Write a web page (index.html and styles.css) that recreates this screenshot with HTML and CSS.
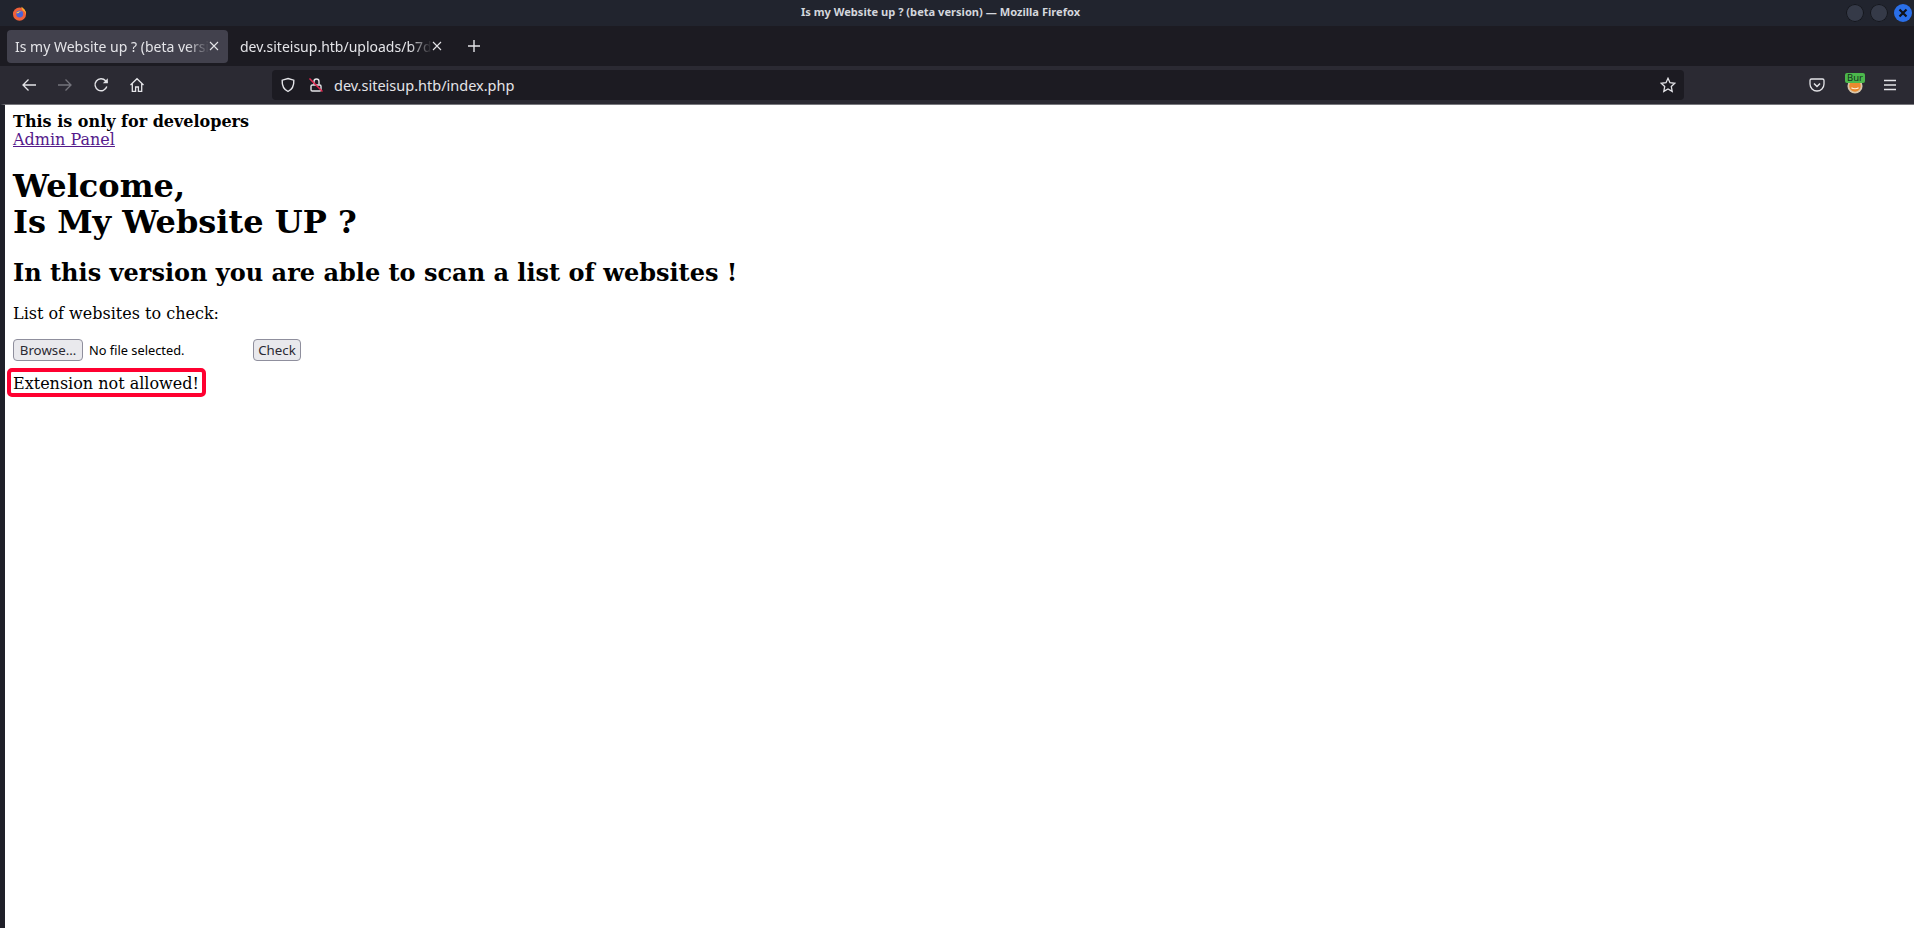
FILE: index.html
```html
<!DOCTYPE html>
<html lang="en">
<head>
    <meta charset="UTF-8">
    <title>Is my Website up ? (beta version) — Mozilla Firefox</title>
    <link rel="stylesheet" href="styles.css">
</head>
<body>

<div class="window">
    <div class="titlebar">
        <svg class="ff-logo" viewBox="0 0 16 16" width="15" height="15">
            <circle cx="8" cy="8.600" r="7" fill="#f0603a"/>
            <path d="M9.500 .8c3.400 1.500 5.800 4.400 5.400 8.500-.6-2.600-2-4-3.600-4.800-.2-1.500-.9-2.800-1.800-3.700z" fill="#ffb02e"/>
            <circle cx="8.200" cy="8.600" r="3.700" fill="#4a62d8"/>
            <path d="M4.500 7.600c1.400-1.900 4-2.600 6.200-1.600-1.700-.2-2.900.5-3.400 1.400-.9.200-1.800.1-2.800.2z" fill="#ffc24a"/>
        </svg>
        <div class="window-title">Is my Website up ? (beta version) — Mozilla Firefox</div>
        <div class="window-buttons">
            <span class="win-btn"></span>
            <span class="win-btn"></span>
            <span class="win-btn win-close">
                <svg viewBox="0 0 18 18" width="18" height="18"><path d="M5.500 5.500l7 7M12.500 5.500l-7 7" stroke="#10131a" stroke-width="2.200" fill="none"/></svg>
            </span>
        </div>
    </div>

    <div class="tabbar">
        <div class="tab tab-active">
            <span class="tab-label">Is my Website up ? (beta versi</span>
            <svg class="tab-close" viewBox="0 0 10 10" width="10" height="10"><path d="M1 1l8 8M9 1l-8 8" stroke="#e4e4e8" stroke-width="1.100" fill="none"/></svg>
        </div>
        <div class="tab tab-other">
            <span class="tab-label">dev.siteisup.htb/uploads/b7d</span>
            <svg class="tab-close" viewBox="0 0 10 10" width="10" height="10"><path d="M1 1l8 8M9 1l-8 8" stroke="#e4e4e8" stroke-width="1.100" fill="none"/></svg>
        </div>
        <svg class="new-tab" viewBox="0 0 12 12" width="12" height="12"><path d="M6 0v12M0 6h12" stroke="#e4e4e8" stroke-width="1.400" fill="none"/></svg>
    </div>

    <div class="navbar">
        <div class="nav-buttons">
            <svg viewBox="0 0 16 16" width="16" height="16"><path d="M15 8H2M7.500 2.500L2 8l5.500 5.500" stroke="#e4e4e8" stroke-width="1.300" fill="none"/></svg>
            <svg viewBox="0 0 16 16" width="16" height="16"><path d="M1 8h13M8.500 2.500L14 8l-5.500 5.500" stroke="#74747c" stroke-width="1.300" fill="none"/></svg>
            <svg viewBox="0 0 16 16" width="16" height="16"><path d="M13.800 9.500A6 6 0 1 1 12.600 3.800L14.500 5.600" stroke="#e4e4e8" stroke-width="1.400" fill="none"/><path d="M14.800 1.200v5h-5z" fill="#e4e4e8"/></svg>
            <svg viewBox="0 0 16 16" width="16" height="16"><path d="M1.500 8L8 1.700 14.500 8M3.300 6.500V14.300H6.600V10H9.400V14.300H12.700V6.500" stroke="#e4e4e8" stroke-width="1.300" fill="none"/></svg>
        </div>
        <div class="urlbar">
            <svg viewBox="0 0 16 16" width="16" height="16"><path d="M8 1.500l5.800 1.700c.3 5-1.300 9-5.800 11.300C3.500 12.200 1.900 8.200 2.200 3.200z" stroke="#e4e4e8" stroke-width="1.400" fill="none"/></svg>
            <svg class="lock" viewBox="0 0 16 16" width="16" height="16">
                <path d="M6 7.500V4.500a2.500 2.500 0 0 1 5 0V7.500" stroke="#e4e4e8" stroke-width="1.400" fill="none"/>
                <rect x="3" y="8" width="10" height="6" rx="1.300" stroke="#e4e4e8" stroke-width="1.400" fill="none"/>
                <path d="M1.500 1.500l13 13" stroke="#e22850" stroke-width="1.500"/>
            </svg>
            <span class="url-text">dev.siteisup.htb/index.php</span>
            <svg class="star" viewBox="0 0 16 16" width="16" height="16"><path d="M8 1.300l2 4.400 4.800.6-3.500 3.300.9 4.800L8 12l-4.200 2.400.9-4.800L1.200 6.300 6 5.700z" stroke="#e4e4e8" stroke-width="1.300" fill="none"/></svg>
        </div>
        <div class="nav-right">
            <svg viewBox="0 0 16 16" width="16" height="16"><path d="M2.500 2h11A1.500 1.500 0 0 1 15 3.500V7A7 7 0 0 1 1 7V3.500A1.500 1.500 0 0 1 2.500 2z" stroke="#e4e4e8" stroke-width="1.300" fill="none"/><path d="M5 6.500L8 9.500l3-3" stroke="#e4e4e8" stroke-width="1.500" fill="none"/></svg>
            <div class="burp">
                <svg viewBox="0 0 18 18" width="16" height="16"><circle cx="9" cy="9" r="8.500" fill="#d9c7ac"/><circle cx="9" cy="9" r="6.500" fill="#e98a2e"/><path d="M5 11c2 1.500 6 1.500 8 0" stroke="#fff3df" stroke-width="1.200" fill="none"/></svg>
                <span class="burp-badge">Bur</span>
            </div>
            <svg viewBox="0 0 12 12" width="12" height="12"><path d="M0 1.500h12M0 6h12M0 10.500h12" stroke="#e4e4e8" stroke-width="1.400" fill="none"/></svg>
        </div>
    </div>

    <div class="content">
        <b>This is only for developers</b><br>
        <a href="#">Admin Panel</a>
        <h1>Welcome,<br>Is My Website UP ?</h1>
        <h2>In this version you are able to scan a list of websites !</h2>
        <form>
            <div class="form-label">List of websites to check:</div>
            <div class="form-row">
                <div class="file-input">
                    <button type="button" class="btn btn-browse">Browse…</button>
                    <span class="file-name">No file selected.</span>
                </div>
                <button type="button" class="btn btn-check">Check</button>
            </div>
        </form>
        <div class="notice"><span class="notice-text">Extension not allowed!</span></div>
    </div>
</div>

</body>
</html>
```

FILE: styles.css
```css
html, body {
    margin: 0;
    height: 100%;
    overflow: hidden;
}
.window {
    height: 928px;
    display: flex;
    flex-direction: column;
    font-family: "Noto Sans", sans-serif;
    background: #1c1b22;
    color: #e4e4e8;
}
.titlebar {
    height: 26px;
    background: #21242e;
    display: flex;
    align-items: center;
    padding: 0 2px 0 12px;
}
.ff-logo {
    display: block;
}
.window-title {
    flex: 1;
    text-align: center;
    font-size: 11.100px;
    font-weight: bold;
    color: #d3d6dc;
    padding-left: 8px;
    padding-bottom: 3px;
}
.window-buttons {
    display: flex;
    gap: 6px;
}
.win-btn {
    width: 18px;
    height: 18px;
    border-radius: 50%;
    background: #353a48;
    box-shadow: inset 0 0 0 1px #14161c;
}
.win-close {
    background: #2a6fe8;
    box-shadow: none;
}
.win-close svg {
    display: block;
}
.tabbar {
    height: 40px;
    background: #1c1b22;
    display: flex;
    align-items: center;
    padding-left: 7px;
    font-size: 14px;
}
.tab {
    width: 221px;
    height: 33px;
    box-sizing: border-box;
    display: flex;
    align-items: center;
    padding: 0 12px 0 8px;
    border-radius: 4px;
}
.tab-other {
    margin-left: 5px;
    width: 209px;
    padding-left: 7px;
    padding-right: 0;
}
.tab-active {
    background: #42414d;
}
.tab-label {
    flex: 1;
    white-space: nowrap;
    -webkit-mask-image: linear-gradient(to left, transparent 0, #000 22px);
    mask-image: linear-gradient(to left, transparent 0, #000 22px);
}
.tab-close {
    flex: none;
}
.new-tab {
    margin-left: 26px;
}
.navbar {
    height: 38px;
    background: #2b2a33;
    display: flex;
    align-items: center;
    padding: 0 18px 0 21px;
}
.nav-buttons {
    display: flex;
    gap: 20px;
    width: 251px;
}
.nav-buttons svg, .nav-right svg {
    display: block;
}
.urlbar {
    width: 1412px;
    height: 30px;
    flex: none;
    background: #1c1b22;
    border-radius: 4px;
    display: flex;
    align-items: center;
    box-sizing: border-box;
    padding: 0 8px 0 8px;
    font-size: 14.500px;
}
.lock {
    margin-left: 12px;
}
.url-text {
    flex: 1;
    margin-left: 10px;
}
.nav-right {
    display: flex;
    align-items: center;
    margin-left: auto;
    gap: 21px;
}
.burp {
    position: relative;
    width: 16px;
    height: 16px;
    margin-top: 2px;
    margin-left: 1px;
}
.burp-badge {
    position: absolute;
    left: -2px;
    top: -5px;
    width: 20px;
    height: 10px;
    background: #4cb84c;
    color: #14301a;
    font-size: 9.500px;
    line-height: 10px;
    border-radius: 2px;
    text-align: center;
}
.content {
    flex: 1;
    border-top: 1px solid #77777c;
    border-left: 5px solid #1f2029;
    background: #fff;
    color: #000;
    padding: 8px;
    font-family: "DejaVu Serif", serif;
    font-size: 16px;
    line-height: 18px;
}
.content a {
    color: #551a8b;
}
h1 {
    font-size: 32px;
    line-height: 36px;
    margin: 19px 0;
}
h2 {
    font-size: 24px;
    line-height: 28px;
    margin: 0 0 18px;
}
.form-label {
    margin-bottom: 16px;
}
.form-row {
    display: flex;
}
.file-input {
    width: 240px;
    display: flex;
    align-items: center;
    gap: 6px;
}
.file-name {
    font-family: "Noto Sans", sans-serif;
    font-size: 12.800px;
}
.btn {
    height: 22px;
    box-sizing: border-box;
    padding: 0;
    font-family: "Noto Sans", sans-serif;
    font-size: 13.300px;
    color: #2b2a33;
    background: #e9e9ed;
    border: 1px solid #8f8f9d;
    border-radius: 4px;
}
.btn-browse {
    width: 70px;
}
.btn-check {
    width: 48px;
}
.notice {
    display: flex;
    margin-top: 7px;
}
.notice-text {
    margin-left: -6px;
    padding: 3px 3px 0 2px;
    border: 4px solid #ff0030;
    border-radius: 5px;
}
```
